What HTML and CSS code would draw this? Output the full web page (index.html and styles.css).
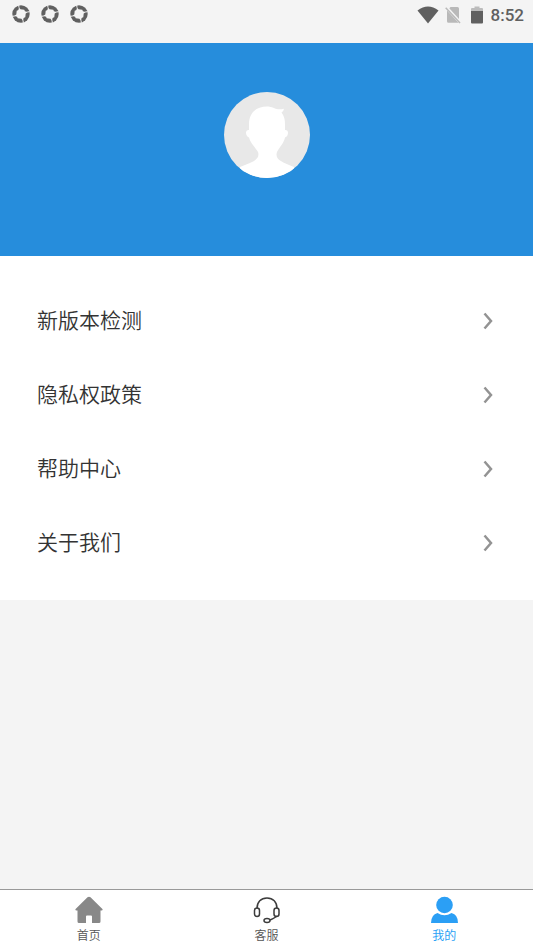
FILE: index.html
```html
<!DOCTYPE html>
<html lang="zh-CN">
<head>
<meta charset="utf-8">
<meta name="viewport" content="width=device-width, initial-scale=1">
<title>我的</title>
<link rel="stylesheet" href="styles.css">
</head>
<body>
<svg width="0" height="0" class="defs" aria-hidden="true">
  <symbol id="shutter" viewBox="0 0 18 18">
    <circle cx="9" cy="9" r="8.700"/>
    <path fill="#f4f4f4" d="M6 .3 7.200 .2Q7 2.800 8.500 4.300L12.300 4.700Q12.500 8 17.700 6L17.800 7.200Q15.200 7 13.700 8.500L13.300 12.300Q10 12.500 12 17.700L10.800 17.800Q11 15.200 9.500 13.700L5.700 13.300Q5.500 10 .3 12L.2 10.800Q2.800 11 4.300 9.500L4.700 5.700Q8 5.500 6 .3Z"/>
  </symbol>
  <symbol id="chevron" viewBox="0 0 10 18">
    <path d="M1.500 1.500 8 9l-6.500 7.500" fill="none" stroke="#939393" stroke-width="2.500"/>
  </symbol>
</svg>

<div class="status">
  <div class="notices">
    <svg class="notice"><use href="#shutter"/></svg>
    <svg class="notice"><use href="#shutter"/></svg>
    <svg class="notice"><use href="#shutter"/></svg>
  </div>
  <div class="system">
    <svg width="22" height="18" viewBox="0 0 22 18"><path d="M.5 4.500Q11-3.500 21.500 4.500L11 17.500Z" fill="#606060"/></svg>
    <svg class="sim" width="16" height="18" viewBox="0 0 16 18"><path d="M5.500 1H12.500Q14 1 14 2.500V13L4.300 2.300ZM2 4.500 13.500 16.800H3.500Q2 16.800 2 15.300Z" fill="#b9b9b9"/><path d="M.7 1.800 15 17" stroke="#b9b9b9" stroke-width="1.500"/></svg>
    <svg class="battery" width="12" height="18" viewBox="0 0 12 18"><path d="M0 5V3Q0 2 1 2H3.500V.5H8.500V2H11Q12 2 12 3V5Z" fill="#bcbcbc"/><path d="M0 5H12V16.500Q12 17.500 11 17.500H1Q0 17.500 0 16.500Z" fill="#606060"/></svg>
    <time class="clock">8:52</time>
  </div>
</div>

<header class="profile">
  <svg class="avatar" viewBox="0 0 86 86" role="img" aria-label="头像">
    <clipPath id="round"><circle cx="43" cy="43" r="43"/></clipPath>
    <g clip-path="url(#round)">
      <path fill="#e8e8e8" d="M0 0h86v86H0z"/>
      <path fill="#fff" d="M25 38V32C25 21 32 14.500 43 14.500C48 14.500 51 17 54 17.300Q57 17.500 60 16.700Q59.500 19.500 57.500 20.500Q61 25 61 32V38Q64 37.500 64 40.500Q64 44.500 61 45.500C60 51 55 56 53 60C50.500 68 58 70 70 75V86H16V75C28 70 36.500 68 34 60C32 56 26 51 25 45.500Q22 44 22 40.500Q22 37.500 25 38Z"/>
    </g>
  </svg>
</header>

<main class="menu">
  <a class="row" href="#version"><span>新版本检测</span><svg class="arrow"><use href="#chevron"/></svg></a>
  <a class="row" href="#privacy"><span>隐私权政策</span><svg class="arrow"><use href="#chevron"/></svg></a>
  <a class="row" href="#help"><span>帮助中心</span><svg class="arrow"><use href="#chevron"/></svg></a>
  <a class="row" href="#about"><span>关于我们</span><svg class="arrow"><use href="#chevron"/></svg></a>
</main>

<nav class="tabs">
  <a class="tab" href="#home">
    <svg class="icon" viewBox="0 0 28 28"><path fill="#888" d="M12.500 1.300Q14 0 15.500 1.300L27.400 13Q28.200 14.500 26.500 14.500H25.500V25.500Q25.500 27 24 27H17V20.500Q17 19.500 16 19.500H12Q11 19.500 11 20.500V27H4Q2.500 27 2.500 25.500V14.500H1.500Q-.2 14.500.6 13Z"/></svg>
    <span>首页</span>
  </a>
  <a class="tab" href="#service">
    <svg class="icon" viewBox="0 0 28 28" fill="none" stroke="#3c3c3c" stroke-width="1.500"><path d="M4 12.500C4 6 8 2 14 2S24 6 24 12.500M24 20Q22.500 21.500 17 24"/><rect x="1.500" y="12" width="5" height="8.500" rx="2.500"/><rect x="21" y="12" width="5" height="8.500" rx="2.500"/><ellipse cx="14" cy="24.500" rx="3" ry="2"/></svg>
    <span>客服</span>
  </a>
  <a class="tab active" href="#mine" aria-current="page">
    <svg class="icon" viewBox="0 0 28 28" fill="#2b9ff5"><circle cx="14.500" cy="9" r="8.300"/><path d="M1 27Q1.200 18.500 7.500 17Q14.500 21.500 21.500 17Q28 18.500 28 27Z"/></svg>
    <span>我的</span>
  </a>
</nav>
</body>
</html>
```
FILE: styles.css
```css
* {
  box-sizing: border-box;
}

body {
  margin: 0;
  min-height: 100vh;
  display: flex;
  flex-direction: column;
  background: #f4f4f4;
  font-family: "Noto Sans CJK SC", sans-serif;
}

a {
  color: inherit;
  text-decoration: none;
}

svg {
  display: block;
  flex: none;
}

.defs {
  position: absolute;
}

.status {
  height: 43px;
  padding: 5px 9px 0 12px;
  display: flex;
  justify-content: space-between;
  align-items: flex-start;
}

.notices {
  display: flex;
  gap: 11px;
}

.notice {
  width: 18px;
  height: 18px;
  fill: #606060;
}

.system {
  display: flex;
  align-items: center;
}

.sim {
  margin-left: 6px;
}

.battery {
  margin-left: 10px;
}

.clock {
  margin-left: 8px;
  color: #606060;
  font: 500 17px/20px Roboto, sans-serif;
}

.profile {
  height: 213px;
  padding-top: 49px;
  background: #268ddc;
}

.avatar {
  width: 86px;
  height: 86px;
  margin: 0 auto;
}

.menu {
  padding: 26px 40px 22px 37px;
  background: #fff;
}

.row {
  height: 74px;
  display: flex;
  align-items: center;
  justify-content: space-between;
  color: #333;
  font-size: 21px;
  font-weight: 350;
  line-height: 30px;
}

.arrow {
  width: 10px;
  height: 18px;
  margin-top: 3px;
}

.tabs {
  height: 60px;
  margin-top: auto;
  border-top: 1px solid #999;
  display: flex;
  background: #fff;
}

.tab {
  flex: 1;
  padding-top: 6px;
  display: flex;
  flex-direction: column;
  align-items: center;
  color: #555;
  font-size: 12px;
  font-weight: 350;
  line-height: 18px;
}

.tab.active {
  color: #2b9ff5;
  font-weight: 400;
}

.icon {
  width: 28px;
  height: 28px;
  margin-bottom: 2px;
}
```
